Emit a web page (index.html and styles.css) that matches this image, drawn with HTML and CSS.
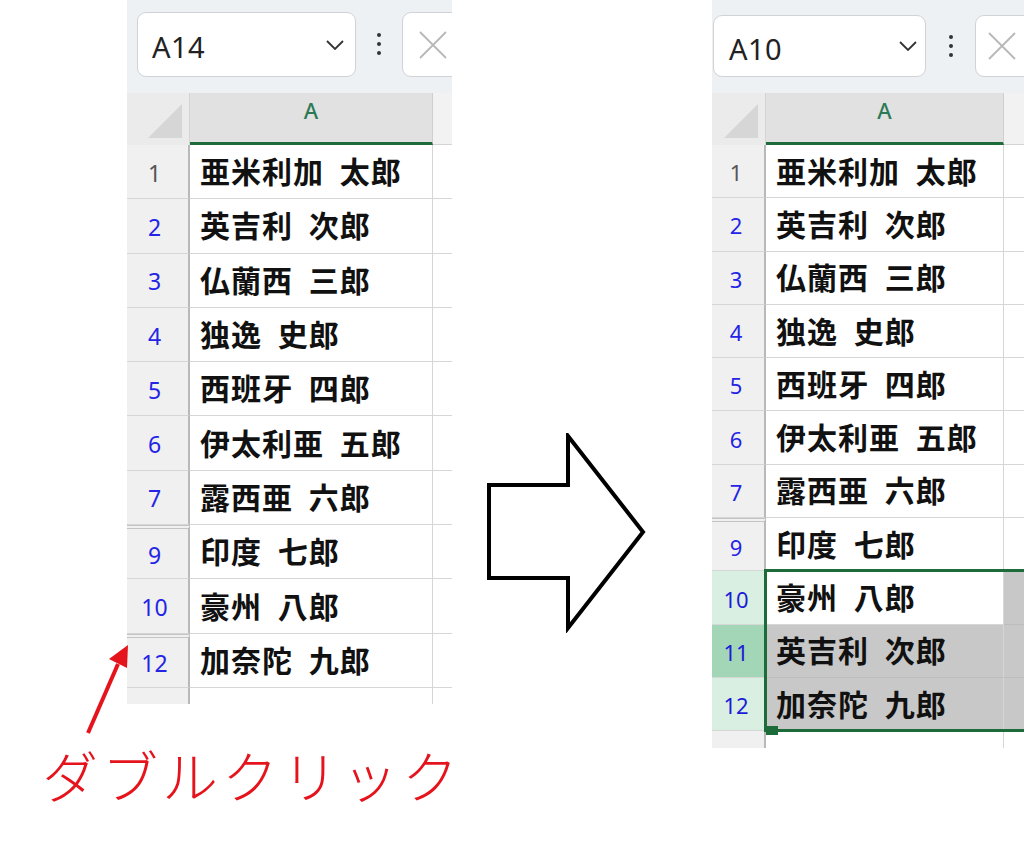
FILE: index.html
```html
<!DOCTYPE html>
<html lang="ja">
<head>
<meta charset="utf-8">
<link rel="stylesheet" href="styles.css">
</head>
<body>
<div class="page">
  <div class="left">
    <div class="sheet sheet-l">
      <div class="toolbar">
        <div class="namebox"><span class="ref">A14</span>
          <svg class="chev" width="18" height="10" viewBox="0 0 18 10"><path d="M1 1 L9 9 L17 1" fill="none" stroke="#333" stroke-width="1.8"/></svg>
        </div>
        <div class="dots"><i></i><i></i><i></i></div>
        <div class="fxbox"><svg width="30" height="30" viewBox="0 0 30 30"><path d="M2 2 L28 28 M28 2 L2 28" stroke="#b8b8b8" stroke-width="1.8"/></svg></div>
      </div>
      <div class="row head">
        <div class="corner"><span class="tri"></span></div>
        <div class="colhead">A</div>
        <div class="colhead b"></div>
      </div>
      <div class="row"><div class="rh gray">1</div><div class="c">亜米利加 太郎</div><div class="c b"></div></div>
      <div class="row"><div class="rh">2</div><div class="c">英吉利 次郎</div><div class="c b"></div></div>
      <div class="row"><div class="rh">3</div><div class="c">仏蘭西 三郎</div><div class="c b"></div></div>
      <div class="row"><div class="rh">4</div><div class="c">独逸 史郎</div><div class="c b"></div></div>
      <div class="row"><div class="rh">5</div><div class="c">西班牙 四郎</div><div class="c b"></div></div>
      <div class="row"><div class="rh">6</div><div class="c">伊太利亜 五郎</div><div class="c b"></div></div>
      <div class="row"><div class="rh">7</div><div class="c">露西亜 六郎</div><div class="c b"></div></div>
      <div class="row"><div class="rh hid">9</div><div class="c">印度 七郎</div><div class="c b"></div></div>
      <div class="row"><div class="rh">10</div><div class="c">豪州 八郎</div><div class="c b"></div></div>
      <div class="row"><div class="rh hid">12</div><div class="c">加奈陀 九郎</div><div class="c b"></div></div>
      <div class="row tail"><div class="rh"></div><div class="c"></div><div class="c b"></div></div>
    </div>
    <div class="label">ダブルクリック</div>
  </div>

  <div class="mid">
    <svg class="bigarrow" width="164" height="200" viewBox="0 0 164 200"><path d="M3 52 L82 52 L82 3 L157 99 L82 195 L82 145 L3 145 Z" fill="#fff" stroke="#000" stroke-width="4" stroke-linejoin="miter"/></svg>
  </div>

  <div class="sheet sheet-r">
    <div class="toolbar">
      <div class="namebox"><span class="ref">A10</span>
        <svg class="chev" width="18" height="10" viewBox="0 0 18 10"><path d="M1 1 L9 9 L17 1" fill="none" stroke="#333" stroke-width="1.8"/></svg>
      </div>
      <div class="dots"><i></i><i></i><i></i></div>
      <div class="fxbox"><svg width="30" height="30" viewBox="0 0 30 30"><path d="M2 2 L28 28 M28 2 L2 28" stroke="#b8b8b8" stroke-width="1.8"/></svg></div>
    </div>
    <div class="row head">
      <div class="corner"><span class="tri"></span></div>
      <div class="colhead">A</div>
      <div class="colhead b"></div>
    </div>
    <div class="body">
      <div class="row"><div class="rh gray">1</div><div class="c">亜米利加 太郎</div><div class="c b"></div></div>
      <div class="row"><div class="rh">2</div><div class="c">英吉利 次郎</div><div class="c b"></div></div>
      <div class="row"><div class="rh">3</div><div class="c">仏蘭西 三郎</div><div class="c b"></div></div>
      <div class="row"><div class="rh">4</div><div class="c">独逸 史郎</div><div class="c b"></div></div>
      <div class="row"><div class="rh">5</div><div class="c">西班牙 四郎</div><div class="c b"></div></div>
      <div class="row"><div class="rh">6</div><div class="c">伊太利亜 五郎</div><div class="c b"></div></div>
      <div class="row"><div class="rh">7</div><div class="c">露西亜 六郎</div><div class="c b"></div></div>
      <div class="row"><div class="rh hid">9</div><div class="c">印度 七郎</div><div class="c b"></div></div>
      <div class="row"><div class="rh sel">10</div><div class="c">豪州 八郎</div><div class="c b shade"></div></div>
      <div class="row"><div class="rh sel strong">11</div><div class="c shade">英吉利 次郎</div><div class="c b shade"></div></div>
      <div class="row"><div class="rh sel">12</div><div class="c shade">加奈陀 九郎</div><div class="c b shade"></div></div>
      <div class="row tail"><div class="rh"></div><div class="c"></div><div class="c b"></div></div>
      <div class="selbox"><span class="handle"></span></div>
    </div>
  </div>

  <svg class="redarrow" width="60" height="100" viewBox="0 0 60 100"><line x1="8" y1="93" x2="38" y2="24" stroke="#e5141c" stroke-width="4"/><path d="M48 5 L29 19 L47 28 Z" fill="#e5141c"/></svg>
</div>
</body>
</html>
```
FILE: styles.css
```css
* { box-sizing: border-box; }
html, body { margin: 0; padding: 0; background: #fff; }
.page {
  position: relative;
  display: flex;
  align-items: flex-start;
  width: 1024px;
  height: 851px;
  overflow: hidden;
  font-family: "Noto Sans", "Noto Sans CJK JP", sans-serif;
}
.left { width: 470px; flex: none; display: flex; flex-direction: column; }
.mid { width: 242px; flex: none; }
.bigarrow { display: block; margin-left: 16px; margin-top: 433px; }

.sheet { overflow: hidden; flex: none; }
.sheet-l { margin-left: 127px; width: 325px; --rh: 54.3px; --hw: 63px; --aw: 243px; }
.sheet-r { width: 312px; --rh: 53.3px; --hw: 54px; --aw: 238px; }

.toolbar {
  height: 93px;
  background: #eef1f4;
  display: flex;
  align-items: flex-start;
  white-space: nowrap;
}
.sheet-l .toolbar { padding: 12px 0 0 10px; }
.sheet-r .toolbar { padding: 15px 0 0 1px; }
.namebox {
  flex: none;
  background: #fff;
  border: 1px solid #cfd3d7;
  border-radius: 9px;
  display: flex;
  align-items: center;
  justify-content: space-between;
  padding: 4px 11px 0 14px;
}
.sheet-l .namebox { width: 219px; height: 65px; }
.sheet-r .namebox { width: 213px; height: 62px; padding-left: 15px; padding-right: 8px; }
.chev { margin-top: -4px; }
.ref { font-size: 29px; color: #222; letter-spacing: 0.5px; }
.chev { display: block; }
.dots { flex: none; width: 46px; display: flex; flex-direction: column; align-items: center; gap: 5px; padding-top: 21px; }
.sheet-r .dots { width: 49px; padding-top: 20px; }
.dots i { display: block; width: 4px; height: 4px; border-radius: 50%; background: #333; }
.fxbox {
  flex: none;
  width: 120px;
  background: #fff;
  border: 1px solid #cfd3d7;
  border-radius: 9px;
  display: flex;
  align-items: center;
  padding-left: 15px;
}
.sheet-l .fxbox { height: 65px; }
.sheet-r .fxbox { height: 62px; padding-left: 11px; }

.row {
  display: grid;
  grid-template-columns: var(--hw) var(--aw) 1fr;
  height: var(--rh);
}
.row.head { height: 52px; }
.corner { position: relative; background: #ebebeb; border-right: 1px solid #d4d4d4; }
.tri {
  position: absolute; right: 7px; bottom: 7px;
  width: 34px; height: 34px;
  background: #d6d6d6;
  clip-path: polygon(100% 0, 100% 100%, 0 100%);
}
.colhead {
  background: #e1e1e1;
  border-bottom: 3px solid #1d6b3a;
  border-right: 1px solid #cfcfcf;
  color: #2c7a55;
  font-family: "Noto Sans", sans-serif;
  font-size: 22px;
  font-weight: 500;
  display: flex; align-items: center; justify-content: center;
  padding-bottom: 16px;
}
.colhead.b { background: #f2f2f2; border-bottom: 1px solid #d4d4d4; border-right: none; }

.rh {
  background: #f0f0f0;
  border-right: 2px solid #b9b9b9;
  border-bottom: 1px solid #d6d6d6;
  color: #2424e6;
  font-family: "Noto Sans", sans-serif;
  font-size: 23px;
  display: flex; align-items: center; justify-content: center;
  padding-right: 6px;
  padding-top: 2px;
}
.sheet-r .rh { padding-right: 4px; font-size: 22px; }
.rh.gray { color: #555; }
.rh.hid { border-top: 4px double #c4c4c4; }
.rh.sel { background: #d9efe2; color: #1c1cd8; }
.rh.sel.strong { background: #a3d5b7; }

.c {
  background: #fff;
  border-right: 1px solid #d6d6d6;
  border-bottom: 1px solid #d6d6d6;
  font-family: "Noto Sans CJK JP", sans-serif;
  font-weight: 700;
  font-size: 30px;
  letter-spacing: 1px;
  word-spacing: 8px;
  color: #111;
  display: flex; align-items: center;
  padding-left: 10px;
  padding-bottom: 3px;
  white-space: nowrap;
  overflow: hidden;
}
.c.b { border-right: none; }
.c.shade { background: #c8c8c8; border-bottom-color: #bdbdbd; }
.row.tail { height: 16px; }
.sheet-r .row.tail { height: 17px; }
.row.tail .c, .row.tail .rh { border-bottom: none; }

.body { position: relative; }
.selbox {
  position: absolute;
  left: 52px;
  top: calc(var(--rh) * 8 - 2px);
  width: 280px;
  height: calc(var(--rh) * 3 + 3px);
  border: 3px solid #1e6b3a;
}
.handle {
  position: absolute;
  left: -1px; bottom: -6px;
  width: 12px; height: 9px;
  background: #1e6b3a;
}

.label {
  margin-left: 42px;
  margin-top: 40px;
  font-family: "Noto Sans CJK JP", sans-serif;
  font-weight: 300;
  font-size: 56px;
  line-height: 60px;
  letter-spacing: 4px;
  color: #e5141c;
  white-space: nowrap;
}
.redarrow { position: absolute; left: 80px; top: 640px; }
```
